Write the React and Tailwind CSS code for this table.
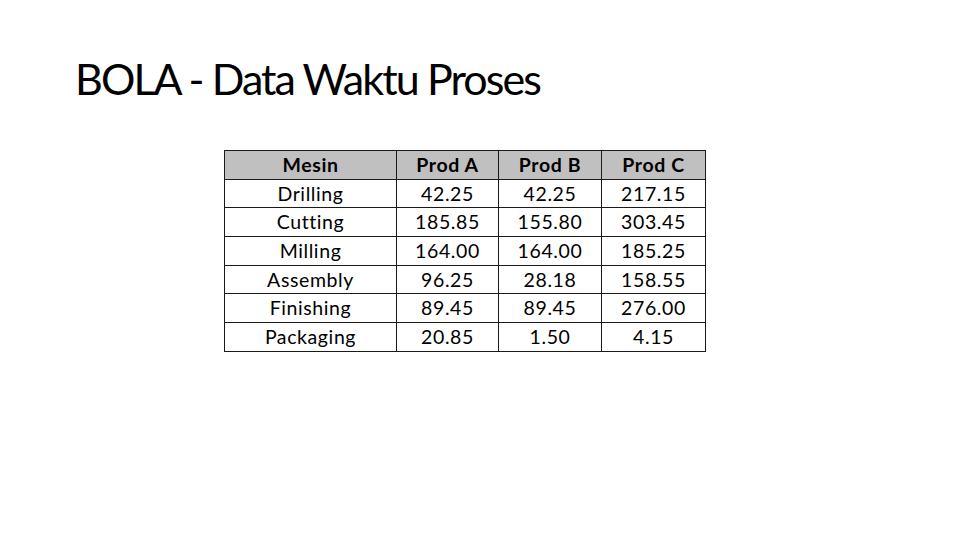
import React from "react";

const rows = [
  ["Drilling", "42.25", "42.25", "217.15"],
  ["Cutting", "185.85", "155.80", "303.45"],
  ["Milling", "164.00", "164.00", "185.25"],
  ["Assembly", "96.25", "28.18", "158.55"],
  ["Finishing", "89.45", "89.45", "276.00"],
  ["Packaging", "20.85", "1.50", "4.15"],
];

const widths = ["w-[172px]", "w-[102px]", "w-[103px]", "w-[104px]"];

const App = () => {
  return (
    <div className="w-[960px] h-[540px] bg-white text-black font-['Lato',sans-serif] overflow-hidden">
      <h1 className="pl-[75px] pt-[53px] text-[43px] leading-[52px] font-normal tracking-[-1.9px]">
        BOLA - Data Waktu Proses
      </h1>
      <div className="pl-[224px] pt-[45px]">
        <table className="border-collapse text-[19.5px] tracking-[0.6px]">
          <thead>
            <tr className="bg-[#c0c0c0] h-[28.7px]">
              {["Mesin", "Prod A", "Prod B", "Prod C"].map((h, i) => (
                <th key={h} className={`${widths[i]} border border-[#1a1a1a] font-bold leading-[26px] p-0`}>
                  {h}
                </th>
              ))}
            </tr>
          </thead>
          <tbody>
            {rows.map((r) => (
              <tr key={r[0]} className="h-[28.7px]">
                {r.map((c, i) => (
                  <td key={i} className={`${widths[i]} border border-[#1a1a1a] text-center leading-[26px] p-0`}>
                    {c}
                  </td>
                ))}
              </tr>
            ))}
          </tbody>
        </table>
      </div>
    </div>
  );
};

export default App;
